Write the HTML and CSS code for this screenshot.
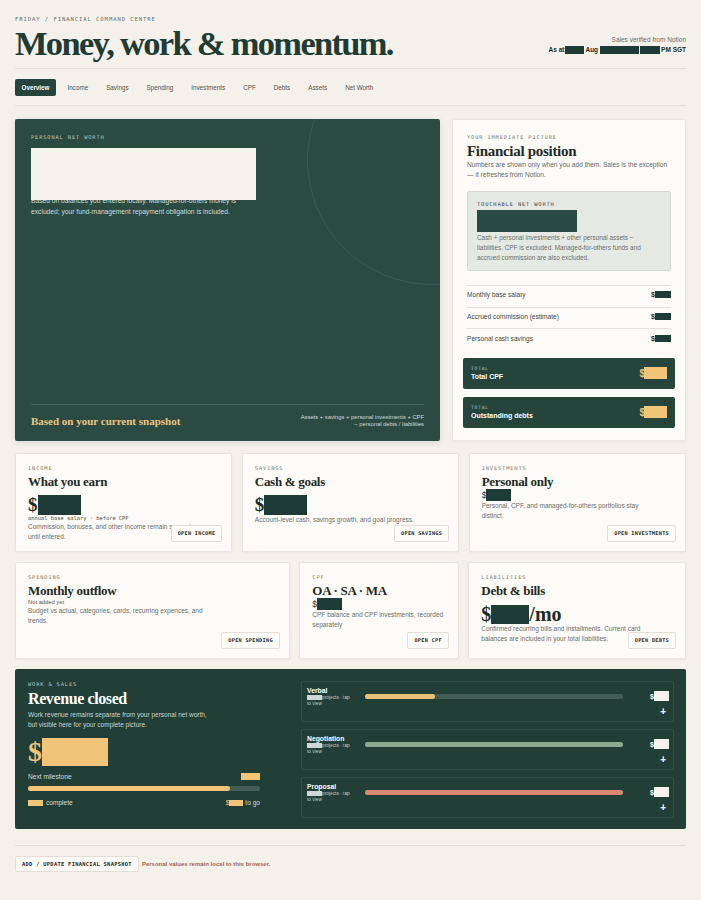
FILE: index.html
```html
<!DOCTYPE html>
<html lang="en">
<head>
<meta charset="utf-8">
<title>Money, work &amp; momentum</title>
<link rel="stylesheet" href="styles.css">
</head>
<body>
<div class="page">
  <header class="top">
    <div class="top-left">
      <div class="eyebrow">FRIDAY / FINANCIAL COMMAND CENTRE</div>
      <h1 class="title">Money, work &amp; momentum.</h1>
    </div>
    <div class="top-right">
      <div class="verified">Sales verified from Notion</div>
      <div class="asat">As at <span class="rd rd-a"></span>Aug <span class="rd rd-b"></span><span class="rd rd-c"></span>PM SGT</div>
    </div>
  </header>

  <nav class="tabs">
    <span class="tab active">Overview</span>
    <span class="tab">Income</span>
    <span class="tab">Savings</span>
    <span class="tab">Spending</span>
    <span class="tab">Investments</span>
    <span class="tab">CPF</span>
    <span class="tab">Debts</span>
    <span class="tab">Assets</span>
    <span class="tab">Net Worth</span>
  </nav>

  <section class="hero-row">
    <div class="hero">
      <div class="hero-ring"></div>
      <div class="mono-label light">PERSONAL NET WORTH</div>
      <div class="hero-value"></div>
      <p class="hero-text">Based on balances you entered locally. Managed-for-others money is excluded; your fund-management repayment obligation is included.</p>
      <div class="hero-foot">
        <div class="hero-foot-title">Based on your current snapshot</div>
        <div class="hero-foot-formula">Assets + savings + personal investments + CPF<br>− personal debts / liabilities</div>
      </div>
    </div>

    <aside class="position">
      <div class="mono-label">YOUR IMMEDIATE PICTURE</div>
      <h2 class="pos-title">Financial position</h2>
      <p class="pos-desc">Numbers are shown only when you add them. Sales is the exception — it refreshes from Notion.</p>
      <div class="touchable">
        <div class="mono-label dark">TOUCHABLE NET WORTH</div>
        <div class="touch-value"></div>
        <p class="touch-text">Cash + personal investments + other personal assets − liabilities. CPF is excluded. Managed-for-others funds and accrued commission are also excluded.</p>
      </div>
      <div class="pos-rows">
        <div class="pos-row"><span>Monthly base salary</span><span class="amt">$<span class="rd rd-s"></span></span></div>
        <div class="pos-row"><span>Accrued commission (estimate)</span><span class="amt">$<span class="rd rd-s"></span></span></div>
        <div class="pos-row"><span>Personal cash savings</span><span class="amt">$<span class="rd rd-s"></span></span></div>
      </div>
      <div class="total">
        <div><div class="total-label">TOTAL</div><div class="total-name">Total CPF</div></div>
        <div class="total-amt">$<span class="gold-box"></span></div>
      </div>
      <div class="total">
        <div><div class="total-label">TOTAL</div><div class="total-name">Outstanding debts</div></div>
        <div class="total-amt">$<span class="gold-box"></span></div>
      </div>
    </aside>
  </section>

  <section class="cards cards-1">
    <div class="card">
      <div class="mono-label">INCOME</div>
      <h3 class="card-title">What you earn</h3>
      <div class="big-amt">$<span class="rd rd-big"></span></div>
      <div class="mono-note">annual base salary · before CPF</div>
      <p class="card-text">Commission, bonuses, and other income remain separate until entered.</p>
      <span class="btn">OPEN INCOME</span>
    </div>
    <div class="card">
      <div class="mono-label">SAVINGS</div>
      <h3 class="card-title">Cash &amp; goals</h3>
      <div class="big-amt">$<span class="rd rd-big"></span></div>
      <p class="card-text">Account-level cash, savings growth, and goal progress.</p>
      <span class="btn">OPEN SAVINGS</span>
    </div>
    <div class="card">
      <div class="mono-label">INVESTMENTS</div>
      <h3 class="card-title">Personal only</h3>
      <div class="small-amt">$<span class="rd rd-sm"></span></div>
      <p class="card-text">Personal, CPF, and managed-for-others portfolios stay distinct.</p>
      <span class="btn">OPEN INVESTMENTS</span>
    </div>
  </section>

  <section class="cards cards-2">
    <div class="card">
      <div class="mono-label">SPENDING</div>
      <h3 class="card-title">Monthly outflow</h3>
      <div class="not-added">Not added yet</div>
      <p class="card-text wide">Budget vs actual, categories, cards, recurring expences, and trends.</p>
      <span class="btn">OPEN SPENDING</span>
    </div>
    <div class="card">
      <div class="mono-label">CPF</div>
      <h3 class="card-title">OA · SA · MA</h3>
      <div class="small-amt">$<span class="rd rd-sm"></span></div>
      <p class="card-text">CPF balance and CPF investments, recorded separately</p>
      <span class="btn">OPEN CPF</span>
    </div>
    <div class="card">
      <div class="mono-label">LIABILITIES</div>
      <h3 class="card-title">Debt &amp; bills</h3>
      <div class="big-amt mo">$<span class="rd rd-mo"></span>/mo</div>
      <p class="card-text">Confirmed recurring bills and installments. Current card balances are included in your total liabilities.</p>
      <span class="btn">OPEN DEBTS</span>
    </div>
  </section>

  <section class="revenue">
    <div class="rev-left">
      <div class="mono-label light">WORK &amp; SALES</div>
      <h2 class="rev-title">Revenue closed</h2>
      <p class="rev-text">Work revenue remains separate from your personal net worth, but visible here for your complete picture.</p>
      <div class="rev-amt">$<span class="gold-big"></span></div>
      <div class="mile-row"><span>Next milestone</span><span class="gold-sm"></span></div>
      <div class="mile-bar"><div class="mile-fill" style="width:87%"></div></div>
      <div class="mile-foot">
        <div class="mf-item"><i class="gold-xs"></i>complete</div>
        <div class="mf-item"><b class="gold-dollar">$</b><i class="gold-xs2"></i>to go</div>
      </div>
    </div>
    <div class="rev-right">
      <div class="stage">
        <div class="stage-name"><b>Verbal</b><small><i class="pale-box"></i>projects · tap to view</small></div>
        <div class="stage-bar"><div class="stage-fill gold" style="width:27%"></div></div>
        <div class="stage-val"><span class="sv">$<i class="white-box"></i></span><span class="plus">+</span></div>
      </div>
      <div class="stage">
        <div class="stage-name"><b>Negotiation</b><small><i class="pale-box"></i>projects · tap to view</small></div>
        <div class="stage-bar"><div class="stage-fill sage" style="width:100%"></div></div>
        <div class="stage-val"><span class="sv">$<i class="white-box"></i></span><span class="plus">+</span></div>
      </div>
      <div class="stage">
        <div class="stage-name"><b>Proposal</b><small><i class="pale-box"></i>projects · tap to view</small></div>
        <div class="stage-bar"><div class="stage-fill salmon" style="width:100%"></div></div>
        <div class="stage-val"><span class="sv">$<i class="white-box"></i></span><span class="plus">+</span></div>
      </div>
    </div>
  </section>

  <footer class="foot">
    <span class="btn btn-foot">ADD / UPDATE FINANCIAL SNAPSHOT</span>
    <span class="foot-note">Personal values remain local to this browser.</span>
  </footer>
</div>
</body>
</html>
```

FILE: styles.css
```css
* { box-sizing: border-box; }
html, body { margin: 0; padding: 0; }
body {
  background: #f4f1eb;
  font-family: "Liberation Sans", Arial, sans-serif;
  color: #2a2f2c;
}
.page { width: 701px; padding: 0 15px 0 15px; }

/* header */
.top { display: flex; justify-content: space-between; align-items: flex-end; padding-top: 15px; padding-bottom: 8px; border-bottom: 1px solid #e4e0d7; }
.eyebrow { font-family: "DejaVu Sans Mono", monospace; font-size: 5.6px; letter-spacing: 0.9px; color: #6c6d68; line-height: 8px; }
.title { font-family: "Liberation Serif", "Times New Roman", serif; font-weight: 700; font-size: 34.5px; letter-spacing: -1.7px; line-height: 34px; margin: 3px 0 0 0; color: #1f3b34; }
.top-right { text-align: right; padding-bottom: 6px; }
.verified { font-size: 6.5px; color: #6b6b66; line-height: 10px; }
.asat { font-size: 6.5px; font-weight: 700; color: #1f2a26; line-height: 9px; display: flex; align-items: center; justify-content: flex-end; }
.rd { display: inline-block; background: #1f3b35; vertical-align: middle; }
.rd-a { width: 19px; height: 8px; margin: 0 1px; }
.rd-b { width: 39px; height: 8px; margin: 0 1px 0 2px; }
.rd-c { width: 20px; height: 8px; margin-right: 1px; }

/* tabs */
.tabs { display: flex; gap: 5px; padding: 9.5px 0 9.5px; border-bottom: 1px solid #e4e0d7; }
.tab { font-size: 6.3px; color: #4e524e; padding: 0 6.5px; height: 17px; line-height: 17px; border-radius: 2px; }
.tab.active { background: #24443c; color: #fff; font-weight: 700; }

/* labels */
.mono-label { font-family: "DejaVu Sans Mono", monospace; font-size: 5.3px; letter-spacing: 0.9px; color: #7a7b76; line-height: 8px; }
.mono-label.light { color: #b7c6bf; }
.mono-label.dark { color: #3d4440; }

/* hero row */
.hero-row { display: grid; grid-template-columns: 425px 1fr; gap: 12px; margin-top: 13px; align-items: start; }
.hero { position: relative; overflow: hidden; background: #2b4a42; border-radius: 2px; height: 322px; padding: 14px 16px 0 16px; display: flex; flex-direction: column; box-shadow: 0 2px 6px rgba(60,50,30,0.12); }
.hero-ring { position: absolute; width: 250px; height: 250px; border-radius: 50%; border: 1px solid rgba(255,255,255,0.09); left: 292px; top: -84px; }
.hero-value { position: relative; z-index: 1; width: 225px; height: 52px; background: #f7f4ee; margin-top: 7px; }
.hero-text { font-size: 6.7px; line-height: 11px; color: #d3ddd7; margin: -5px 0 0 0; width: 230px; }
.hero-foot { margin-top: auto; border-top: 1px solid rgba(255,255,255,0.14); display: flex; justify-content: space-between; align-items: center; padding: 9px 0 13px; }
.hero-foot-title { font-family: "Liberation Serif", serif; font-weight: 700; font-size: 11px; color: #eec680; }
.hero-foot-formula { font-size: 5.8px; line-height: 7px; color: #d5ded9; text-align: right; }

/* position card */
.position { height: 322px; background: #fcfbf7; border: 1px solid #ebe7de; border-radius: 2px; padding: 13px 14px 0; box-shadow: 0 1px 4px rgba(60,50,30,0.06); }
.pos-title { font-family: "Liberation Serif", serif; font-weight: 700; font-size: 15px; letter-spacing: -0.3px; line-height: 16px; margin: 2px 0 1px; color: #1f2a26; }
.pos-desc { font-size: 6.6px; line-height: 10px; color: #666a66; margin: 0; }
.touchable { margin-top: 11px; background: #e5e9e4; border: 1px solid #d2d9d2; border-radius: 2px; padding: 8px 9px 7px; }
.touch-value { width: 100px; height: 22px; background: #284a42; margin-top: 2px; }
.touch-text { font-size: 6.4px; line-height: 10px; color: #6a6f6b; margin: 1px 0 0; }
.pos-rows { margin-top: 14px; border-top: 1px solid #e6e2d9; }
.pos-row { display: flex; justify-content: space-between; align-items: center; height: 21.5px; font-size: 6.6px; color: #454945; border-bottom: 1px solid #e6e2d9; padding-bottom: 3px; }
.pos-row:last-child { border-bottom: none; }
.amt { font-weight: 700; color: #1f2a26; display: flex; align-items: center; font-size: 7px; }
.rd-s { width: 16px; height: 7px; }
.total { background: #24443c; border-radius: 2px; margin: 7px -4px 0; height: 31px; padding: 0 8px; display: flex; justify-content: space-between; align-items: center; }
.total + .total { margin-top: 8px; }
.total-label { font-family: "DejaVu Sans Mono", monospace; font-size: 4.6px; letter-spacing: 0.8px; color: #b9c7c0; line-height: 7px; }
.total-name { font-size: 7px; font-weight: 700; color: #fff; line-height: 10px; }
.total-amt { display: flex; align-items: center; color: #f0c57a; font-weight: 700; font-size: 10px; }
.gold-box { display: inline-block; width: 23px; height: 12px; background: #f0c57a; margin-left: -1px; }

/* cards */
.cards { display: grid; gap: 9.5px; margin-top: 12px; }
.cards-1 { grid-template-columns: 1fr 1fr 1fr; }
.cards-1 .card { height: 99px; }
.cards-2 { grid-template-columns: 274fr 159fr 217fr; margin-top: 10px; }
.cards-2 .card { height: 97px; }
.card { position: relative; background: #fcfbf7; border: 1px solid #e9e5dc; border-radius: 2px; padding: 10px 12px 10px 12px; box-shadow: 0 1px 3px rgba(60,50,30,0.05); }
.card-title { font-family: "Liberation Serif", serif; font-weight: 700; font-size: 13px; letter-spacing: -0.3px; line-height: 15px; margin: 2px 0 0; color: #1f2a26; }
.big-amt { font-family: "Liberation Serif", serif; font-weight: 700; font-size: 19px; line-height: 20px; color: #1f2a26; display: flex; align-items: center; margin-top: 6px; }
.rd-big { width: 43px; height: 20px; background: #1f3b35; }
.big-amt.mo { margin-top: 6px; font-size: 20px; }
.rd-mo { width: 38px; height: 19px; background: #1f3b35; }
.small-amt { font-size: 8.5px; color: #2c302d; display: flex; align-items: center; line-height: 12px; }
.rd-sm { width: 25px; height: 12px; background: #1f3b35; }
.mono-note { font-family: "DejaVu Sans Mono", monospace; font-size: 5.4px; color: #4a4d49; line-height: 7px; margin-top: 0; }
.card-text { font-size: 6.5px; line-height: 10px; color: #6a6e6a; margin: 0; max-width: 170px; }
.card-text.wide { max-width: 182px; }
.not-added { font-size: 5.8px; color: #555; line-height: 7px; margin-top: 1px; }
.btn { position: absolute; right: 9px; bottom: 9px; font-family: "DejaVu Sans Mono", monospace; font-weight: 700; font-size: 5.2px; letter-spacing: 0.3px; color: #1f2a26; background: #fdfcf9; border: 1px solid #e3dfd6; border-radius: 2px; height: 17px; line-height: 15px; padding: 0 6px; }

/* revenue */
.revenue { margin-top: 10px; background: #213e37; border-radius: 2px; height: 160px; display: grid; grid-template-columns: 273px 1fr; align-items: start; padding: 11px 12px 0 13px; }
.rev-left { width: 232px; }
.rev-title { font-family: "Liberation Serif", serif; font-weight: 700; font-size: 16px; letter-spacing: -0.4px; line-height: 18px; margin: 2px 0 2px; color: #fff; }
.rev-text { font-size: 6.5px; line-height: 10px; color: #cbd6d0; margin: 0; max-width: 186px; }
.rev-amt { font-family: "Liberation Serif", serif; font-weight: 700; font-size: 28px; line-height: 28px; color: #f0c57a; display: flex; align-items: center; margin-top: 8px; }
.gold-big { display: inline-block; width: 66px; height: 28px; background: #f0c57a; }
.mile-row { display: flex; justify-content: space-between; align-items: center; font-size: 6.6px; color: #d6ded9; margin-top: 6px; line-height: 9px; height: 9px; }
.gold-sm { display: inline-block; width: 19px; height: 7px; background: #f0c57a; }
.mile-bar { height: 5px; background: rgba(255,255,255,0.16); border-radius: 3px; margin-top: 5px; }
.mile-fill { height: 100%; background: #f0c57a; border-radius: 3px; }
.mile-foot { display: flex; justify-content: space-between; align-items: center; margin-top: 7px; height: 9px; font-size: 6.6px; color: #d6ded9; }
.mf-item { display: flex; align-items: center; line-height: 9px; }
.gold-xs { display: block; width: 15px; height: 6px; background: #f0c57a; margin-right: 3px; }
.gold-dollar { color: #f0c57a; font-weight: 400; }
.gold-xs2 { display: block; width: 14px; height: 6px; background: #f0c57a; margin-right: 2px; }
.rev-right { display: flex; flex-direction: column; gap: 7px; padding-top: 1px; }
.stage { height: 41px; border: 1px solid rgba(255,255,255,0.09); border-radius: 2px; display: grid; grid-template-columns: 52px 258px 1fr; column-gap: 6px; padding: 4px 4px 0 5px; }
.stage-name b { display: block; font-size: 6.8px; color: #fff; font-weight: 700; line-height: 9px; }
.stage-name small { display: block; font-size: 4.8px; color: #c3cfc9; line-height: 6px; width: 47px; }
.pale-box { display: inline-block; width: 15px; height: 5px; background: #cfd9d4; vertical-align: middle; }
.stage-bar { height: 5px; background: rgba(255,255,255,0.16); border-radius: 3px; margin-top: 8px; }
.stage-fill { height: 100%; border-radius: 3px; }
.stage-fill.gold { background: #e8c078; }
.stage-fill.sage { background: #8eaa93; }
.stage-fill.salmon { background: #d98770; }
.stage-val { display: flex; flex-direction: column; align-items: flex-end; }
.sv { display: flex; align-items: center; font-size: 7px; color: #fff; font-weight: 700; margin-top: 5px; }
.white-box { display: block; width: 15px; height: 10px; background: #f7f5f0; }
.plus { font-size: 10px; font-weight: 700; color: #fff; line-height: 10px; margin-top: 6px; margin-right: 3px; }

/* footer */
.foot { margin-top: 16px; border-top: 1px solid #e4e0d7; padding-top: 10px; display: flex; align-items: center; gap: 3px; }
.btn-foot { position: static; display: inline-block; font-size: 5.4px; padding: 0 6px; height: 16px; line-height: 14px; }
.foot-note { font-size: 6px; font-weight: 700; color: #a9624f; }
```
